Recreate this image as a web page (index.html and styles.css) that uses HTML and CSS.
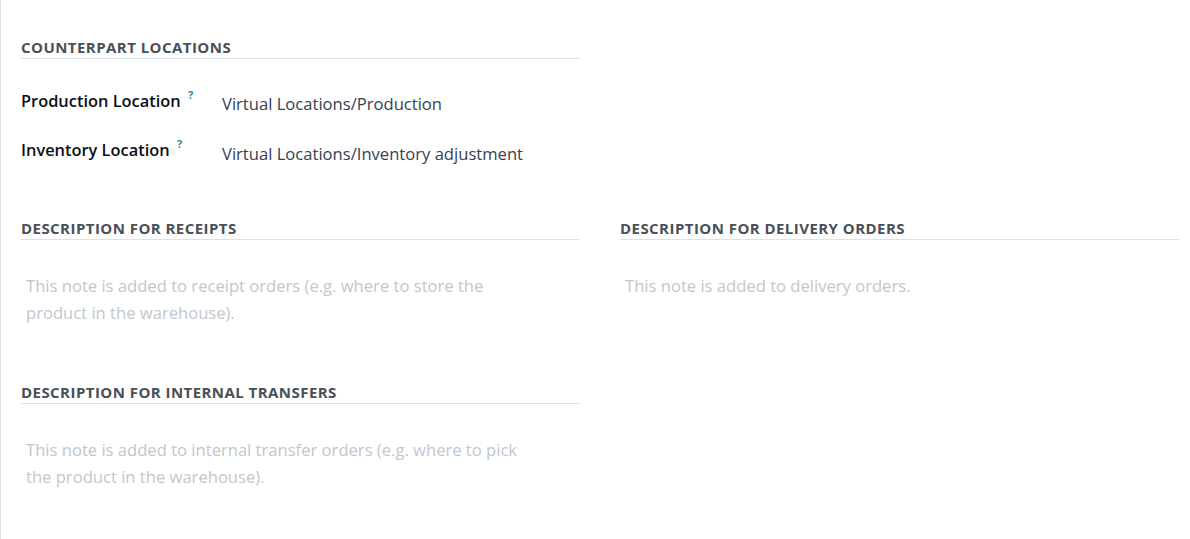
FILE: index.html
```html
<!DOCTYPE html>
<html>
<head>
<meta charset="utf-8">
<link rel="stylesheet" href="styles.css">
</head>
<body>
<div class="sheet">
  <div class="grid">
    <section class="group">
      <h3 class="sep">Counterpart Locations</h3>
      <div class="fields">
        <div class="row">
          <div class="label">Production Location <sup class="help">?</sup></div>
          <div class="value">Virtual Locations/Production</div>
        </div>
        <div class="row">
          <div class="label">Inventory Location <sup class="help">?</sup></div>
          <div class="value">Virtual Locations/Inventory adjustment</div>
        </div>
      </div>
    </section>
    <div></div>
    <section class="group">
      <h3 class="sep">Description for Receipts</h3>
      <div class="note">This note is added to receipt orders (e.g. where to store the product in the warehouse).</div>
    </section>
    <section class="group">
      <h3 class="sep">Description for Delivery Orders</h3>
      <div class="note">This note is added to delivery orders.</div>
    </section>
    <section class="group">
      <h3 class="sep">Description for Internal Transfers</h3>
      <div class="note">This note is added to internal transfer orders (e.g. where to pick the product in the warehouse).</div>
    </section>
  </div>
</div>
</body>
</html>
```

FILE: styles.css
```css
html, body {
  margin: 0;
  padding: 0;
  background: #fff;
}
body {
  font-family: "Open Sans", "Noto Sans", sans-serif;
  color: #374151;
  height: 539px;
  overflow: hidden;
}
.sheet {
  border-left: 1px solid #dee2e6;
  min-height: 539px;
  box-sizing: border-box;
  padding: 37px 11px 0 20px;
}
.grid {
  display: grid;
  grid-template-columns: 559px 559px;
  column-gap: 40px;
}
.group {
  margin-bottom: 56px;
}
.group:first-child {
  margin-bottom: 55px;
}
.sep {
  margin: 0;
  font-size: 15px;
  letter-spacing: 0.45px;
  font-weight: 700;
  text-transform: uppercase;
  color: #495057;
  line-height: 20px;
  padding-bottom: 1px;
  border-bottom: 1px solid #dee2e6;
}
.fields {
  padding-top: 26px;
  display: flex;
  flex-direction: column;
  gap: 21px;
}
.row {
  display: flex;
  align-items: baseline;
}
.label {
  width: 201px;
  font-weight: 600;
  font-size: 16.4px;
  color: #0b0f17;
  line-height: 24px;
}
.help {
  color: #1d8ca1;
  font-size: 11px;
  font-weight: 700;
  margin-left: 3px;
  position: relative;
  top: -2px;
}
.value {
  font-size: 16.6px;
  line-height: 24px;
  color: #374151;
  position: relative;
  top: 3px;
}
.note {
  margin-top: 32px;
  padding-left: 5px;
  width: 500px;
  font-size: 16.6px;
  line-height: 27px;
  color: #c2c6cd;
}
```
